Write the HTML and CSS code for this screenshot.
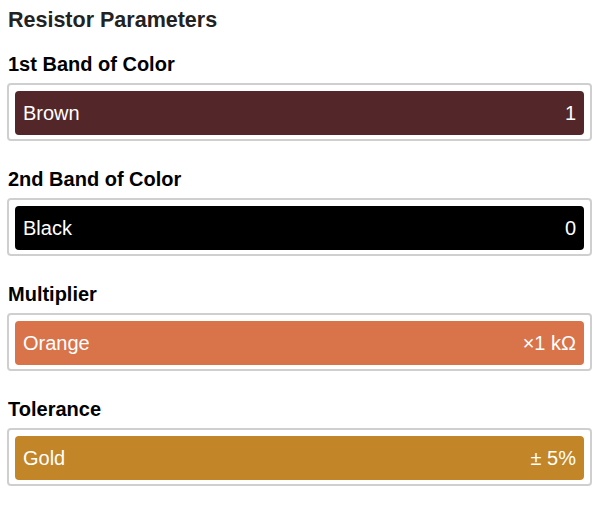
FILE: index.html
```html
<!DOCTYPE html>
<html>
<head>
<meta charset="utf-8">
<link rel="stylesheet" href="styles.css">
</head>
<body>
<div class="page">
  <h2 class="title">Resistor Parameters</h2>
  <div class="field">
    <div class="label">1st Band of Color</div>
    <div class="box"><div class="band brown"><span>Brown</span><span>1</span></div></div>
  </div>
  <div class="field">
    <div class="label">2nd Band of Color</div>
    <div class="box"><div class="band black"><span>Black</span><span>0</span></div></div>
  </div>
  <div class="field">
    <div class="label">Multiplier</div>
    <div class="box"><div class="band orange"><span>Orange</span><span>×1 kΩ</span></div></div>
  </div>
  <div class="field">
    <div class="label">Tolerance</div>
    <div class="box"><div class="band gold"><span>Gold</span><span>± 5%</span></div></div>
  </div>
</div>
</body>
</html>
```
FILE: styles.css
```css
html, body { margin: 0; background: #fff; }
.page {
  padding: 8px 7px 0 7px;
  font-family: "Liberation Sans", Arial, sans-serif;
}
.title {
  margin: 0 0 21px 1px;
  font-size: 21.5px;
  line-height: 24px;
  font-weight: bold;
  color: #222;
}
.field { margin-bottom: 27px; }
.label {
  margin: 0 0 8px 1px;
  font-size: 20px;
  line-height: 22px;
  font-weight: bold;
  color: #000;
}
.box {
  height: 58px;
  box-sizing: border-box;
  border: 2px solid #cfcfcf;
  border-radius: 4px;
  padding: 6px;
}
.band {
  height: 44px;
  border-radius: 4px;
  display: flex;
  align-items: center;
  justify-content: space-between;
  padding: 0 8px;
  color: #fff;
  font-size: 20px;
}
.brown { background: #532729; }
.black { background: #000; }
.orange { background: #d9734a; }
.gold { background: #c28528; }
```
